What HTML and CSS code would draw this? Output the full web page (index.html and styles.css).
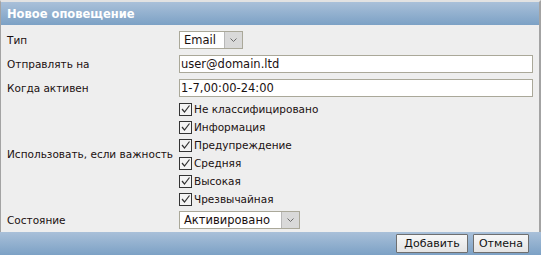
FILE: index.html
```html
<!DOCTYPE html>
<html lang="ru">
<head>
<meta charset="utf-8">
<title>Новое оповещение</title>
<link rel="stylesheet" href="styles.css">
</head>
<body>
<div class="dialog">
  <div class="header">Новое оповещение</div>
  <div class="form">
    <div class="row">
      <div class="label">Тип</div>
      <div class="value">
        <div class="select select-type"><span class="sel-text">Email</span><span class="sel-btn"><svg width="9" height="6" viewBox="0 0 9 6"><path d="M1.5 1.5 L4.5 4.5 L7.5 1.5" fill="none" stroke="#6b6b6b" stroke-width="1"/></svg></span></div>
      </div>
    </div>
    <div class="row">
      <div class="label">Отправлять на</div>
      <div class="value"><div class="input">user@domain.ltd</div></div>
    </div>
    <div class="row">
      <div class="label">Когда активен</div>
      <div class="value"><div class="input">1-7,00:00-24:00</div></div>
    </div>
    <div class="row row-checks">
      <div class="label">Использовать, если важность</div>
      <div class="value checks">
        <div class="check"><span class="box"><svg width="11" height="11" viewBox="0 0 11 11"><path d="M2 5 L4.5 8 L9.5 1.5" fill="none" stroke="#333" stroke-width="1.2"/></svg></span>Не классифицировано</div>
        <div class="check"><span class="box"><svg width="11" height="11" viewBox="0 0 11 11"><path d="M2 5 L4.5 8 L9.5 1.5" fill="none" stroke="#333" stroke-width="1.2"/></svg></span>Информация</div>
        <div class="check"><span class="box"><svg width="11" height="11" viewBox="0 0 11 11"><path d="M2 5 L4.5 8 L9.5 1.5" fill="none" stroke="#333" stroke-width="1.2"/></svg></span>Предупреждение</div>
        <div class="check"><span class="box"><svg width="11" height="11" viewBox="0 0 11 11"><path d="M2 5 L4.5 8 L9.5 1.5" fill="none" stroke="#333" stroke-width="1.2"/></svg></span>Средняя</div>
        <div class="check"><span class="box"><svg width="11" height="11" viewBox="0 0 11 11"><path d="M2 5 L4.5 8 L9.5 1.5" fill="none" stroke="#333" stroke-width="1.2"/></svg></span>Высокая</div>
        <div class="check"><span class="box"><svg width="11" height="11" viewBox="0 0 11 11"><path d="M2 5 L4.5 8 L9.5 1.5" fill="none" stroke="#333" stroke-width="1.2"/></svg></span>Чрезвычайная</div>
      </div>
    </div>
    <div class="row">
      <div class="label">Состояние</div>
      <div class="value">
        <div class="select select-state"><span class="sel-text">Активировано</span><span class="sel-btn"><svg width="9" height="6" viewBox="0 0 9 6"><path d="M1.5 1.5 L4.5 4.5 L7.5 1.5" fill="none" stroke="#6b6b6b" stroke-width="1"/></svg></span></div>
      </div>
    </div>
  </div>
  <div class="footer">
    <button class="btn btn-add">Добавить</button>
    <button class="btn btn-cancel">Отмена</button>
  </div>
</div>
</body>
</html>
```

FILE: styles.css
```css
html, body {
  margin: 0;
  padding: 0;
  background: #eeeeee;
}
body {
  font-family: "DejaVu Sans", Verdana, sans-serif;
  font-size: 10.5px;
  color: #1a1010;
}
.dialog {
  width: 541px;
  height: 255px;
  box-sizing: border-box;
  border-top: 2px solid #e2e2e2;
  border-left: 1px solid #a3a3a3;
  border-right: 2px solid #a3a3a3;
  background: #eeeeee;
  display: flex;
  flex-direction: column;
}
.header {
  height: 23px;
  background: linear-gradient(#a9c0d9, #7ca1c5);
  color: #ffffff;
  font-weight: bold;
  font-size: 11.5px;
  padding-left: 6px;
  display: flex;
  align-items: center;
}
.form {
  flex: 1;
  display: flex;
  flex-direction: column;
  padding-top: 3px;
}
.row {
  display: flex;
  align-items: center;
  height: 24px;
}
.row-checks {
  height: 108px;
}
.label {
  width: 172px;
  padding-left: 6px;
  flex: none;
}
.value {
  flex: 1;
  padding-right: 6px;
}
.input {
  height: 18px;
  box-sizing: border-box;
  border: 1px solid #aaa899;
  background: #ffffff;
  padding-left: 1px;
  line-height: 16px;
  font-size: 11.5px;
}
.select {
  height: 18px;
  box-sizing: border-box;
  border: 1px solid #aaa899;
  background: #ffffff;
  display: flex;
  font-size: 11.5px;
}
.select-type { width: 64px; }
.select-state { width: 121px; }
.sel-text {
  flex: 1;
  padding-left: 4px;
  line-height: 16px;
}
.sel-btn {
  width: 17px;
  background: #d9d9d9;
  border-left: 1px solid #b8b8b8;
  display: flex;
  align-items: center;
  justify-content: center;
}
.checks {
  display: flex;
  flex-direction: column;
}
.check {
  height: 18px;
  display: flex;
  align-items: center;
}
.box {
  width: 11px;
  height: 11px;
  border: 1px solid #333333;
  background: #f4f4f4;
  margin-right: 2px;
  display: flex;
}
.footer {
  height: 23px;
  background: linear-gradient(#a9c0d9, #7ca1c5);
  display: flex;
  align-items: center;
  justify-content: flex-end;
  gap: 5px;
  padding-right: 12px;
  margin-left: -1px;
  margin-right: -2px;
}
.btn {
  font-family: "DejaVu Sans", Verdana, sans-serif;
  font-size: 11px;
  color: #111;
  height: 19px;
  padding: 0;
  border: 1px solid #6f6f6f;
  background: linear-gradient(#f7f7f7, #e4e4e4);
  border-radius: 1px;
}
.btn-add { width: 72px; }
.btn-cancel { width: 56px; }
```
